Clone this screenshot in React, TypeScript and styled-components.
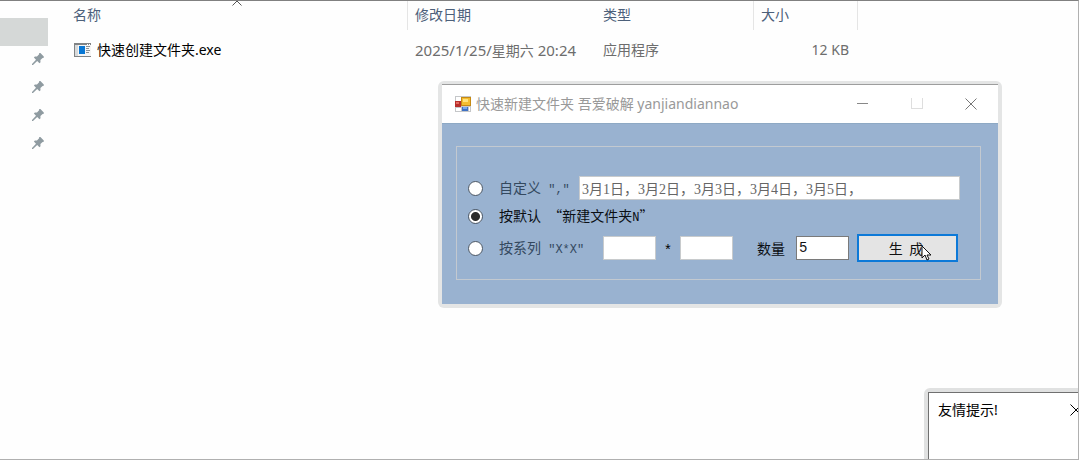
import React from 'react';
import styled, { createGlobalStyle } from 'styled-components';

const GlobalStyle = createGlobalStyle`
  * { box-sizing: border-box; }
  body {
    margin: 0;
    background: #fefefe;
    color: #000;
    font: 14px/20px "Noto Sans", "Noto Sans CJK SC", sans-serif;
  }
  button, input { font: inherit; color: inherit; }
`;

const Desktop = styled.div`
  position: relative;
  display: flex;
  min-height: 100vh;
  overflow: hidden;
  border: solid #b0b0b0;
  border-width: 1px 1px 1px 0;
  border-top-color: #808080;
`;

const Sidebar = styled.nav`
  display: flex;
  flex-direction: column;
  width: 66px;
  padding: 17px 18px 0 0;
`;

const SelectedItem = styled.div`
  height: 28px;
  background: #d5d8d7;
`;

const PinnedItem = styled.div`
  display: flex;
  align-items: center;
  justify-content: flex-end;
  height: 28px;
  padding: 0 4px 2px 0;
`;

const FileTable = styled.table`
  align-self: flex-start;
  table-layout: fixed;
  width: 792px;
  border-collapse: separate;
  border-spacing: 0;
`;

const HeaderCell = styled.th<{ $divider?: boolean }>`
  position: relative;
  height: 29px;
  padding: 0 7px 2px;
  border-right: 1px solid ${(p) => (p.$divider ? '#e5e5e5' : 'transparent')};
  color: #4c607a;
  font-weight: 400;
  text-align: left;
`;

const Cell = styled.td<{ $strong?: boolean; $right?: boolean }>`
  height: 40px;
  padding: 0 9px 0 7px;
  color: ${(p) => (p.$strong ? '#000' : '#6d6d6d')};
  text-align: ${(p) => (p.$right ? 'right' : 'left')};
  white-space: nowrap;
`;

const FileName = styled.div`
  display: flex;
  align-items: center;
  gap: 6px;
  padding-left: 1px;
`;

const DateDigits = styled.span`
  font-size: 15px;
`;

const SortMark = styled.svg`
  position: absolute;
  top: 0;
  left: 50%;
  margin-left: -5px;
`;

const WindowFrame = styled.section`
  position: absolute;
  left: 438px;
  top: 80px;
  width: 564px;
  padding: 3px 4px 4px;
  border-radius: 6px;
  background: #e4e5e5;
`;

const TitleBar = styled.header`
  display: flex;
  align-items: center;
  height: 39px;
  padding-left: 13px;
  border-top: 1px solid #9d9d9d;
  background: #fff;
  color: #999;
`;

const Title = styled.h1`
  flex: 1;
  margin: 0 0 0 5px;
  font-size: 14px;
  font-weight: 400;
`;

const CaptionButton = styled.button`
  display: flex;
  align-items: center;
  justify-content: center;
  width: 54px;
  height: 100%;
  padding: 0;
  border: 0;
  background: none;
`;

const WindowBody = styled.div`
  padding: 22px 17px 24px 14px;
  border-top: 1px solid #8ea9c4;
  background: #99b2d0;
`;

const Options = styled.form`
  display: flex;
  flex-direction: column;
  gap: 4px;
  padding: 29px 20px 15px 11px;
  border: 1px solid #c3c9d0;
  font-family: "Noto Sans CJK SC", sans-serif;
`;

const OptionRow = styled.div<{ $tall?: boolean }>`
  display: flex;
  align-items: center;
  height: ${(p) => (p.$tall ? 32 : 24)}px;
`;

const Radio = styled.input.attrs({ type: 'radio' })`
  appearance: none;
  flex: none;
  width: 15px;
  height: 15px;
  margin: 0 16px 0 0;
  border: 1px solid #4c5764;
  border-radius: 50%;
  background: #fff;
  &:checked {
    background: radial-gradient(circle, #2b2b2b 4px, #fff 5px);
  }
`;

const OptionLabel = styled.label<{ $width?: number; $active?: boolean }>`
  flex: none;
  width: ${(p) => (p.$width ? `${p.$width}px` : 'auto')};
  color: ${(p) => (p.$active ? '#0b0f14' : '#34495f')};
  line-height: 20px;
  white-space: pre;
`;

const Mono = styled.span`
  font-family: "Liberation Mono", monospace;
  font-size: 12px;
`;

const TextBox = styled.input<{ $wide?: boolean; $active?: boolean }>`
  flex: ${(p) => (p.$wide ? '1' : 'none')};
  width: 53px;
  min-width: 0;
  height: 24px;
  padding: 0 2px;
  border: 1px solid ${(p) => (p.$active ? '#7a7a7a' : '#c8cbcd')};
  border-radius: 0;
  background: #fff;
  color: ${(p) => (p.$active ? '#111' : '#666')};
  font-family: ${(p) => (p.$active ? '"Liberation Mono"' : '"Liberation Serif"')}, "Noto Sans CJK SC", serif;
`;

const Times = styled.span`
  width: 24px;
  padding-top: 6px;
  text-align: center;
  font-family: "Liberation Mono", monospace;
`;

const CountLabel = styled.label`
  margin: 0 11px 0 24px;
  color: #0b0f14;
`;

const GenerateButton = styled.button`
  width: 101px;
  height: 28px;
  margin-left: 8px;
  padding: 0 3px 0 0;
  border: 2px solid #0c79d8;
  background: #e4e4e4;
  color: #111;
  line-height: 20px;
  white-space: pre;
`;

const Pointer = styled.svg`
  position: absolute;
  left: 921px;
  top: 244px;
`;

const Notice = styled.aside`
  position: absolute;
  right: 0;
  bottom: 0;
  width: 154px;
  height: 71px;
  padding: 4px 0 0 4px;
  border-top-left-radius: 6px;
  background: #e0e1e1;
`;

const NoticeBody = styled.div`
  display: flex;
  align-items: flex-start;
  justify-content: space-between;
  height: 100%;
  padding: 7px 0 0 9px;
  border: solid #707070;
  border-width: 1px 0 0 1px;
  background: #fff;
`;

const NoticeClose = styled.button`
  display: flex;
  width: 8px;
  margin-top: 4px;
  padding: 0;
  overflow: hidden;
  border: 0;
  background: none;
`;

const PinIcon = () => (
  <svg width="12" height="12" viewBox="0 0 12 12" fill="#8f9ba1" aria-hidden="true">
    <path d="M7.2 0h1.2l3.4 3.5v1.2l-1.2.2-2.2 2.2.1 2.1-1 1L5.200 8 1 12H0v-1l4-4.200L1.900 4.500l1-1 2.100.1L7.100 1.300Z" />
  </svg>
);

const ExeIcon = () => (
  <svg width="17" height="14" viewBox="0 0 17 14" aria-hidden="true" shapeRendering="crispEdges">
    <path fill="#f5f5f5" d="M0 0h17v14H0z" />
    <path fill="#808385" d="M0 0h17v2H0zM0 13h17v1H0zM0 0h1v14H0z" />
    <path fill="#d8dadb" d="M1 2h3v11H1z" />
    <path fill="#0877d4" d="M5 3h6v8H5z" />
    <path fill="#8a9196" d="M12 3h4v1h-4zM12 5h3v1h-3zM12 7h4v1h-4zM12 9h3v1h-3z" />
    <path fill="#fff" d="M13 1h1v1h-1zM15 1h1v1h-1z" />
  </svg>
);

const FormIcon = () => (
  <svg width="16" height="16" viewBox="0 0 16 16" aria-hidden="true">
    <path fill="#c5c7c9" d="M0 0h16v16H0z" />
    <path fill="#fff" d="M1 1h5v4H1zM1 12h5v3H1z" />
    <path fill="#b72e2b" d="M0 5h6v6H0z" />
    <path fill="#e26b60" d="M1 6h3v2H1z" />
    <path fill="#c58a14" d="M6 1h10v9H6z" />
    <path fill="#f4bd30" d="M7 2h8v7H7z" />
    <path fill="#ffe27c" d="M8 3h5v3H8z" />
    <path fill="#3f72c4" d="M7 11h6v4H7z" />
    <path fill="#78a9ec" d="M8 11h4v2H8z" />
    <path fill="#fff" d="M14 11h1v4h-1z" />
  </svg>
);

export default function App() {
  return (
    <>
      <GlobalStyle />
      <Desktop>
        <Sidebar aria-label="快速访问">
          <SelectedItem />
          {[0, 1, 2, 3].map((i) => (
            <PinnedItem key={i}>
              <PinIcon />
            </PinnedItem>
          ))}
        </Sidebar>
        <FileTable>
          <colgroup>
            <col width="342" />
            <col width="188" />
            <col width="158" />
            <col width="104" />
          </colgroup>
          <thead>
            <tr>
              <HeaderCell $divider>
                名称
                <SortMark width="10" height="5" viewBox="0 0 10 5" fill="none" stroke="#555" aria-hidden="true">
                  <path d="M.5 4.500 5 0l4.500 4.500" />
                </SortMark>
              </HeaderCell>
              <HeaderCell>修改日期</HeaderCell>
              <HeaderCell $divider>类型</HeaderCell>
              <HeaderCell $divider>大小</HeaderCell>
            </tr>
          </thead>
          <tbody>
            <tr>
              <Cell $strong>
                <FileName>
                  <ExeIcon />
                  快速创建文件夹.exe
                </FileName>
              </Cell>
              <Cell>
                <DateDigits>2025/1/25/</DateDigits>星期六<DateDigits> 20:24</DateDigits>
              </Cell>
              <Cell>应用程序</Cell>
              <Cell $right>12 KB</Cell>
            </tr>
          </tbody>
        </FileTable>

        <WindowFrame>
          <TitleBar>
            <FormIcon />
            <Title>快速新建文件夹 吾爱破解 yanjiandiannao</Title>
            <CaptionButton aria-label="最小化">
              <svg width="12" height="12" stroke="#888" shapeRendering="crispEdges">
                <path d="M0 5.500h11" />
              </svg>
            </CaptionButton>
            <CaptionButton aria-label="最大化">
              <svg width="12" height="12" fill="none" stroke="#dedede" shapeRendering="crispEdges">
                <path d="M.5 0v10.500h11V0" />
              </svg>
            </CaptionButton>
            <CaptionButton aria-label="关闭">
              <svg width="12" height="12" stroke="#777">
                <path d="m.5.5 11 11M11.500.5l-11 11" />
              </svg>
            </CaptionButton>
          </TitleBar>
          <WindowBody>
            <Options onSubmit={(e) => e.preventDefault()}>
              <OptionRow>
                <Radio id="custom" name="mode" />
                <OptionLabel htmlFor="custom" $width={80}>
                  自定义<Mono>{' ","'}</Mono>
                </OptionLabel>
                <TextBox $wide aria-label="自定义名称" defaultValue="3月1日，3月2日，3月3日，3月4日，3月5日，" />
              </OptionRow>
              <OptionRow>
                <Radio id="standard" name="mode" defaultChecked />
                <OptionLabel htmlFor="standard" $active>
                  按默认<Mono> </Mono>“新建文件夹<Mono>N</Mono>”
                </OptionLabel>
              </OptionRow>
              <OptionRow $tall>
                <Radio id="series" name="mode" />
                <OptionLabel htmlFor="series" $width={104}>
                  按系列<Mono>{' "X*X"'}</Mono>
                </OptionLabel>
                <TextBox aria-label="系列一" />
                <Times>*</Times>
                <TextBox aria-label="系列二" />
                <CountLabel htmlFor="count">数量</CountLabel>
                <TextBox id="count" $active defaultValue="5" />
                <GenerateButton type="submit">{'生  成'}</GenerateButton>
              </OptionRow>
            </Options>
          </WindowBody>
        </WindowFrame>

        <Notice>
          <NoticeBody>
            友情提示!
            <NoticeClose aria-label="关闭提示">
              <svg width="12" height="12" stroke="#000">
                <path d="m.5.5 11 11M11.500.5l-11 11" />
              </svg>
            </NoticeClose>
          </NoticeBody>
        </Notice>

        <Pointer width="11" height="17" viewBox="0 0 11 17" fill="#fff" stroke="#111" aria-hidden="true">
          <path d="M1 1v12l3-3 2 5 2-1-2-4h4Z" />
        </Pointer>
      </Desktop>
    </>
  );
}
